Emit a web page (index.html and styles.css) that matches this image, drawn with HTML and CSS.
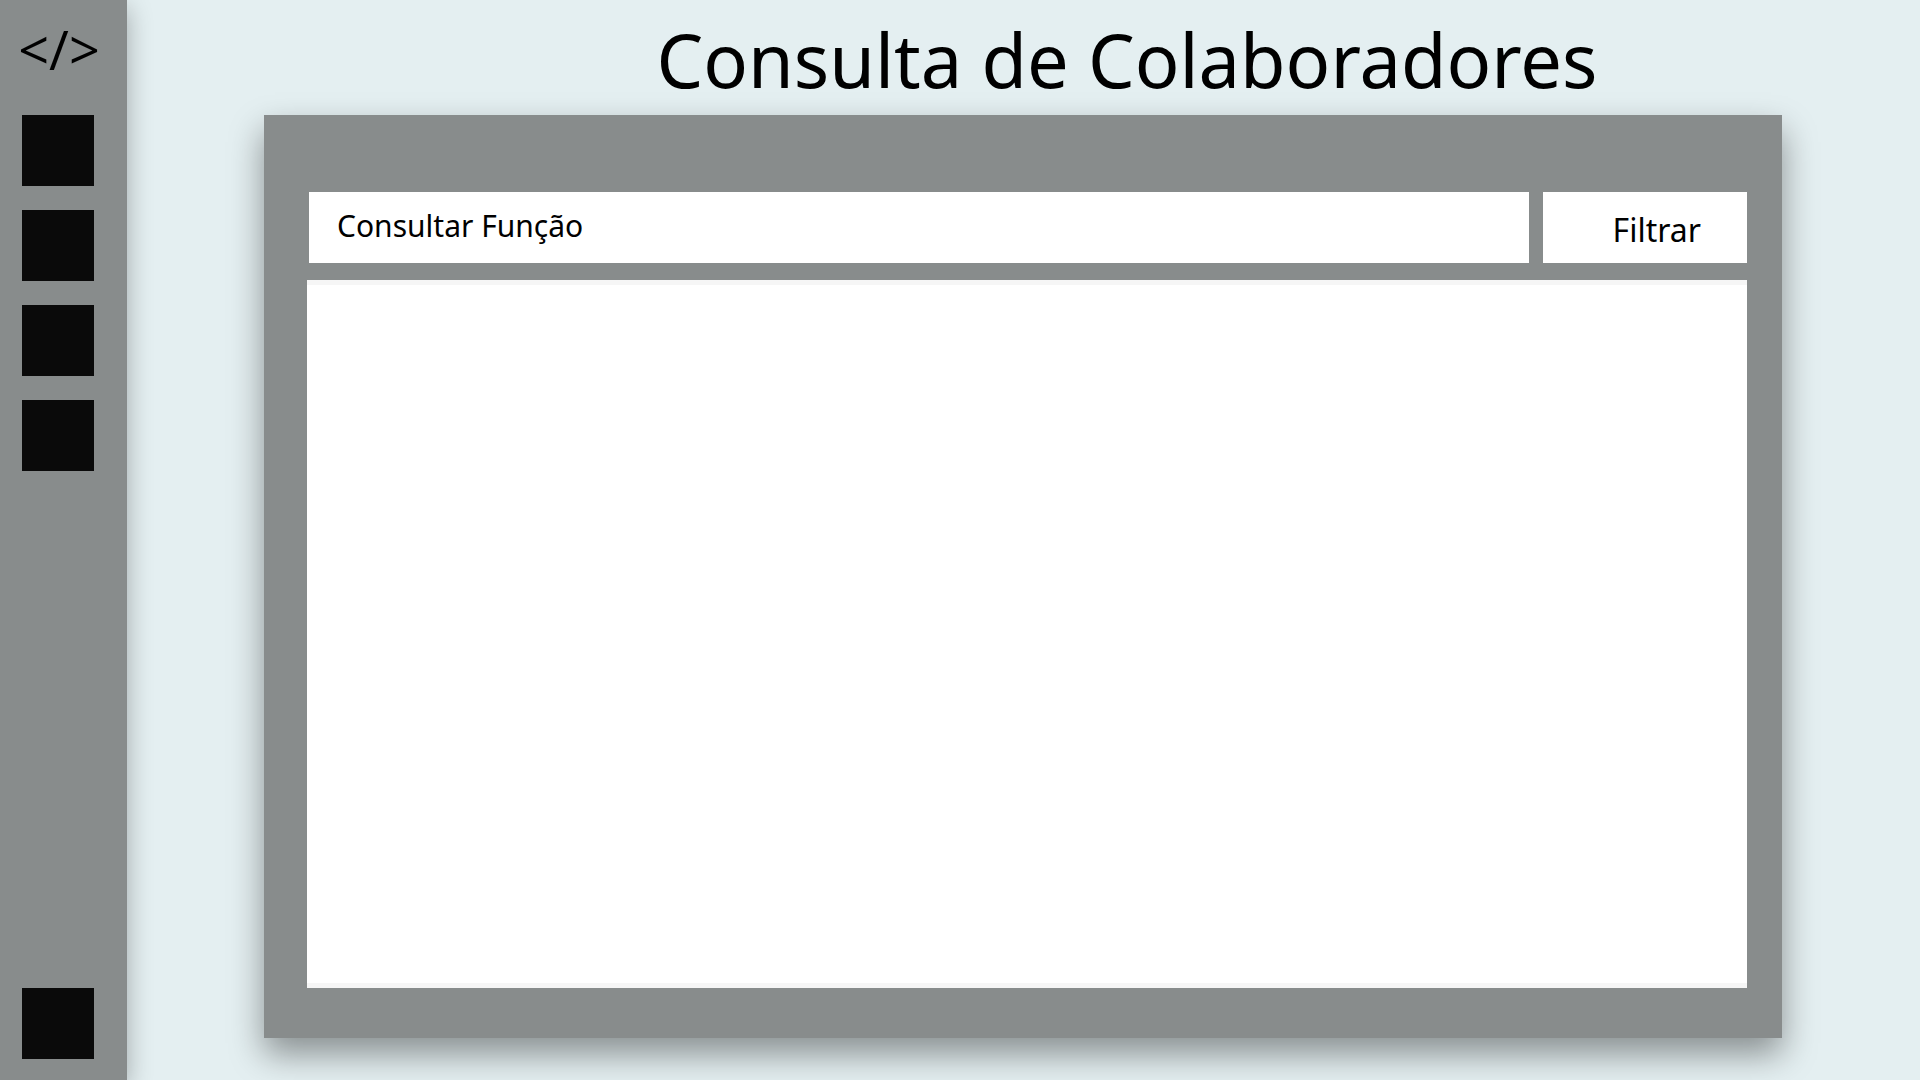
FILE: index.html
```html
<!DOCTYPE html>
<html lang="pt-BR">
<head>
  <meta charset="utf-8">
  <meta name="viewport" content="width=device-width, initial-scale=1">
  <title>Consulta de Colaboradores</title>
  <link rel="stylesheet" href="styles.css">
</head>
<body>
  <aside class="sidebar">
    <a class="logo" href="#">&lt;/&gt;</a>
    <nav class="menu">
      <a class="menu-item" href="#"></a>
      <a class="menu-item" href="#"></a>
      <a class="menu-item" href="#"></a>
      <a class="menu-item" href="#"></a>
      <a class="menu-item menu-item-last" href="#"></a>
    </nav>
  </aside>
  <main class="page">
    <h1 class="title">Consulta de Colaboradores</h1>
    <section class="panel">
      <form class="search">
        <input class="search-input" type="text" placeholder="Consultar Função" aria-label="Consultar Função">
        <button class="search-button" type="button">Filtrar</button>
      </form>
      <div class="results"></div>
    </section>
  </main>
</body>
</html>
```
FILE: styles.css
```css
* {
  box-sizing: border-box;
}

body {
  margin: 0;
  min-height: 100vh;
  display: flex;
  background: #e4eff1;
  color: #000;
  font-family: "Noto Sans", "Open Sans", sans-serif;
}

.sidebar {
  flex: 0 0 127px;
  display: flex;
  flex-direction: column;
  padding-bottom: 21px;
  background: #888c8c;
  box-shadow: 0 8px 24px rgba(0, 0, 0, 0.3);
}

.logo {
  height: 115px;
  padding: 17px 9px 0 0;
  color: #000;
  font-family: "Open Sans", "Noto Sans", sans-serif;
  font-size: 54px;
  font-weight: 400;
  line-height: 64px;
  text-align: center;
  text-decoration: none;
}

.menu {
  flex: 1;
  display: flex;
  flex-direction: column;
  gap: 24px;
  padding-left: 22px;
}

.menu-item {
  width: 72px;
  height: 71px;
  background: #0a0a0a;
}

.menu-item-last {
  margin-top: auto;
}

.page {
  flex: 1;
  display: flex;
  flex-direction: column;
  padding: 0 138px 42px 137px;
}

.title {
  height: 115px;
  margin: 0;
  padding-left: 208px;
  font-size: 74px;
  font-weight: 400;
  line-height: 120px;
  text-align: center;
  white-space: nowrap;
}

.panel {
  flex: 1;
  display: flex;
  flex-direction: column;
  gap: 17px;
  padding: 77px 35px 50px 43px;
  background: #888c8c;
  box-shadow: 0 16px 32px rgba(0, 0, 0, 0.4);
}

.search {
  display: flex;
  gap: 14px;
  padding-left: 2px;
}

.search-input,
.search-button {
  height: 71px;
  border: 0;
  border-radius: 0;
  background: #fff;
  color: #000;
  font-family: inherit;
}

.search-input {
  flex: 1;
  padding: 0 28px 4px;
  font-size: 30px;
}

.search-input::placeholder {
  color: #000;
  opacity: 1;
}

.search-button {
  width: 204px;
  padding: 4px 46px 0 0;
  font-size: 32px;
  text-align: right;
}

.results {
  flex: 1;
  border: solid #f6f6f6;
  border-width: 5px 0;
  background: #fff;
}
```
